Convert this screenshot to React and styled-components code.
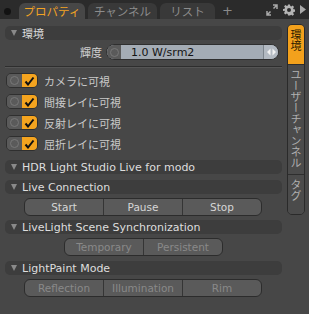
import React from "react";
import styled, { createGlobalStyle } from "styled-components";

const GlobalStyle = createGlobalStyle`
  html, body { margin: 0; padding: 0; background: #2b2b2b; }
  * { box-sizing: border-box; }
`;

const latin = `"DejaVu Sans", "Noto Sans CJK JP", sans-serif`;
const jp = `"Noto Sans CJK JP", "DejaVu Sans", sans-serif`;

const Frame = styled.div`
  width: 309px;
  height: 314px;
  display: flex;
  flex-direction: column;
  background: #2b2b2b;
  overflow: hidden;
`;

const TopBar = styled.div`
  height: 19px;
  display: flex;
  align-items: flex-end;
  padding-left: 4px;
`;

const Dot = styled.span`
  width: 7px;
  height: 7px;
  border-radius: 50%;
  background: #121212;
  margin: 0 8px 4px 0;
`;

const Tab = styled.div`
  height: 16px;
  width: ${(p) => p.$w}px;
  margin-right: 3px;
  border-radius: 6px 6px 0 0;
  background: ${(p) => (p.$active ? "#474747" : "#393939")};
  color: ${(p) => (p.$active ? "#f2a324" : "#8c8c8c")};
  font-family: ${jp};
  font-size: 11.5px;
  line-height: 16px;
  text-align: center;
`;

const Plus = styled.span`
  color: #8a8a8a;
  font-family: ${latin};
  font-size: 13px;
  line-height: 16px;
  margin-left: 4px;
`;

const TopIcons = styled.div`
  margin-left: auto;
  display: flex;
  align-items: center;
  gap: 5px;
  height: 19px;
  padding-right: 3px;
`;

const Body = styled.div`
  flex: 1;
  display: flex;
  background: #474747;
`;

const Main = styled.div`
  flex: 1;
  display: flex;
  flex-direction: column;
  padding: 7px 0 0 5px;
`;

const SectionHead = styled.div`
  height: 14px;
  width: 277px;
  border-radius: 5px;
  background: #3d3d3d;
  display: flex;
  align-items: center;
  gap: 5px;
  padding-left: 6px;
  margin-top: ${(p) => p.$mt || 0}px;
  color: #dedede;
  font-family: ${(p) => (p.$jp ? jp : latin)};
  font-size: 11px;
`;

const Arrow = styled.span`
  width: 0;
  height: 0;
  border-left: 3.5px solid transparent;
  border-right: 3.5px solid transparent;
  border-top: 6px solid #8a8a8a;
`;

const FieldRow = styled.div`
  display: flex;
  align-items: center;
  height: 16px;
  margin-top: 4px;
`;

const FieldLabel = styled.span`
  width: 101px;
  text-align: right;
  padding-right: 4px;
  color: #cfcfcf;
  font-family: ${jp};
  font-size: 11px;
`;

const Field = styled.div`
  width: 173px;
  height: 16px;
  border-radius: 8px;
  border: 1px solid #2f2f2f;
  background: #a4acb5;
  display: flex;
  align-items: center;
  overflow: hidden;
`;

const FieldKnob = styled.div`
  width: 14px;
  height: 100%;
  background: #5a5a5a;
  display: flex;
  align-items: center;
  justify-content: center;
`;

const Ring = styled.span`
  width: ${(p) => p.$s}px;
  height: ${(p) => p.$s}px;
  border-radius: 50%;
  border: 1px solid #777;
`;

const FieldValue = styled.span`
  flex: 1;
  padding-left: 10px;
  color: #141414;
  font-family: ${latin};
  font-size: 11px;
`;

const FieldSpin = styled.div`
  width: 15px;
  height: 100%;
  border-left: 1px solid #7d858d;
  background: #b3bac2;
  display: flex;
  align-items: center;
  justify-content: center;
`;

const Divider = styled.div`
  width: 277px;
  height: 2px;
  margin-top: 6px;
  border-top: 1px solid #2e2e2e;
  border-bottom: 1px solid #555;
`;

const CheckList = styled.div`
  display: flex;
  flex-direction: column;
  gap: 6px;
  margin-top: 5px;
  padding-left: 1px;
`;

const CheckRow = styled.div`
  display: flex;
  align-items: center;
  height: 15px;
  gap: 6px;
`;

const Toggle = styled.div`
  width: 32px;
  height: 15px;
  border-radius: 5px;
  border: 1px solid #2f2f2f;
  display: flex;
  overflow: hidden;
`;

const ToggleOff = styled.div`
  flex: 1;
  background: #5a5a5a;
  display: flex;
  align-items: center;
  justify-content: center;
`;

const ToggleOn = styled.div`
  flex: 1;
  background: #f4a41f;
  display: flex;
  align-items: center;
  justify-content: center;
`;

const CheckLabel = styled.span`
  color: #c9c9c9;
  font-family: ${jp};
  font-size: 11px;
`;

const ButtonGroup = styled.div`
  display: flex;
  height: 18px;
  width: ${(p) => p.$w}px;
  margin: 4px 0 0 ${(p) => p.$ml}px;
  border: 1px solid #2c2c2c;
  border-radius: 6px;
  background: #5a5a5a;
  overflow: hidden;
`;

const Btn = styled.div`
  flex: 1;
  display: flex;
  align-items: center;
  justify-content: center;
  color: ${(p) => (p.$disabled ? "#898989" : "#d6d6d6")};
  font-family: ${latin};
  font-size: 10.5px;
  & + & { border-left: 1px solid #353535; }
`;

const SideBar = styled.div`
  width: 18px;
  margin: 5px 4px 0 4px;
  height: 191px;
  display: flex;
  flex-direction: column;
  border: 1px solid #2a2a2a;
  border-radius: 5px;
  overflow: hidden;
  background: #4b4b4b;
`;

const SideTab = styled.div`
  height: ${(p) => p.$h}px;
  background: ${(p) => (p.$active ? "#f3a11c" : "#4b4b4b")};
  color: ${(p) => (p.$active ? "#2a1a00" : "#b0b0b0")};
  writing-mode: vertical-rl;
  display: flex;
  align-items: center;
  justify-content: flex-start;
  padding-top: 4px;
  font-family: ${jp};
  font-size: 11px;
  line-height: 16px;
  & + & { border-top: 1px solid #2e2e2e; }
`;

function Check() {
  return (
    <svg width="11" height="10" viewBox="0 0 11 10">
      <path d="M1.5 5.5 L4 8.5 L9.5 1.5" fill="none" stroke="#111" strokeWidth="2" />
    </svg>
  );
}

const visibility = ["カメラに可視", "間接レイに可視", "反射レイに可視", "屈折レイに可視"];

export default function App() {
  return (
    <Frame>
      <GlobalStyle />
      <TopBar>
        <Dot />
        <Tab $active $w={66}>プロパティ</Tab>
        <Tab $w={69}>チャンネル</Tab>
        <Tab $w={55}>リスト</Tab>
        <Plus>+</Plus>
        <TopIcons>
          <svg width="12" height="12" viewBox="0 0 12 12">
            <path d="M7 1 H11 V5 M11 1 L7.5 4.5 M5 11 H1 V7 M1 11 L4.5 7.5" fill="none" stroke="#a9a9a9" strokeWidth="1.5" />
          </svg>
          <svg width="12" height="12" viewBox="0 0 24 24">
            <path fill="#b4b4b4" d="M10 1h4l.6 3.2 2 .9 2.7-1.9 2.8 2.8-1.9 2.7.9 2 3.2.6v4l-3.2.6-.9 2 1.9 2.7-2.8 2.8-2.7-1.9-2 .9L14 23h-4l-.6-3.2-2-.9-2.7 1.9-2.8-2.8 1.9-2.7-.9-2L0 14v-4l3.2-.6.9-2L2.2 4.7 5 1.9l2.7 1.9 2-.9zM12 8a4 4 0 100 8 4 4 0 000-8z" />
          </svg>
          <svg width="6" height="9" viewBox="0 0 6 9">
            <path d="M0 0 L6 4.5 L0 9 Z" fill="#a9a9a9" />
          </svg>
        </TopIcons>
      </TopBar>
      <Body>
        <Main>
          <SectionHead $jp>
            <Arrow />
            環境
          </SectionHead>
          <FieldRow>
            <FieldLabel>輝度</FieldLabel>
            <Field>
              <FieldKnob>
                <Ring $s={9} />
              </FieldKnob>
              <FieldValue>1.0 W/srm2</FieldValue>
              <FieldSpin>
                <svg width="9" height="8" viewBox="0 0 9 8">
                  <path d="M0 4 L3.5 0.5 V7.5 Z M9 4 L5.5 0.5 V7.5 Z" fill="#f2f2f2" />
                </svg>
              </FieldSpin>
            </Field>
          </FieldRow>
          <Divider />
          <CheckList>
            {visibility.map((label) => (
              <CheckRow key={label}>
                <Toggle>
                  <ToggleOff>
                    <Ring $s={9} />
                  </ToggleOff>
                  <ToggleOn>
                    <Check />
                  </ToggleOn>
                </Toggle>
                <CheckLabel>{label}</CheckLabel>
              </CheckRow>
            ))}
          </CheckList>
          <SectionHead $mt={9}>
            <Arrow />
            HDR Light Studio Live for modo
          </SectionHead>
          <SectionHead $mt={6}>
            <Arrow />
            Live Connection
          </SectionHead>
          <ButtonGroup $w={238} $ml={19}>
            <Btn>Start</Btn>
            <Btn>Pause</Btn>
            <Btn>Stop</Btn>
          </ButtonGroup>
          <SectionHead $mt={4}>
            <Arrow />
            LiveLight Scene Synchronization
          </SectionHead>
          <ButtonGroup $w={159} $ml={59}>
            <Btn $disabled>Temporary</Btn>
            <Btn $disabled>Persistent</Btn>
          </ButtonGroup>
          <SectionHead $mt={5}>
            <Arrow />
            LightPaint Mode
          </SectionHead>
          <ButtonGroup $w={238} $ml={19}>
            <Btn $disabled>Reflection</Btn>
            <Btn $disabled>Illumination</Btn>
            <Btn $disabled>Rim</Btn>
          </ButtonGroup>
        </Main>
        <SideBar>
          <SideTab $active $h={39}>環境</SideTab>
          <SideTab $h={112}>ユーザーチャンネル</SideTab>
          <SideTab $h={40}>タグ</SideTab>
        </SideBar>
      </Body>
    </Frame>
  );
}
